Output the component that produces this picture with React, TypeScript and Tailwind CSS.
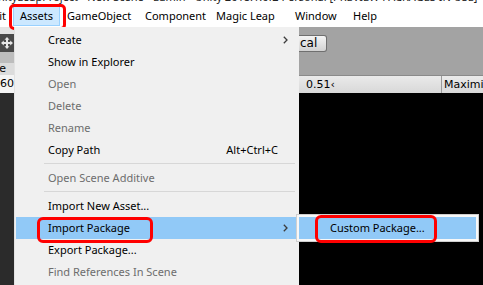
import React from 'react';

type Item =
  | { kind: 'item'; label: string; disabled?: boolean; shortcut?: string; sub?: boolean; active?: boolean }
  | { kind: 'sep' };

const items: Item[] = [
  { kind: 'item', label: 'Create', sub: true },
  { kind: 'item', label: 'Show in Explorer' },
  { kind: 'item', label: 'Open', disabled: true },
  { kind: 'item', label: 'Delete', disabled: true },
  { kind: 'item', label: 'Rename', disabled: true },
  { kind: 'item', label: 'Copy Path', shortcut: 'Alt+Ctrl+C' },
  { kind: 'sep' },
  { kind: 'item', label: 'Open Scene Additive', disabled: true },
  { kind: 'sep' },
  { kind: 'item', label: 'Import New Asset...' },
  { kind: 'item', label: 'Import Package', sub: true, active: true },
  { kind: 'item', label: 'Export Package...' },
  { kind: 'item', label: 'Find References In Scene', disabled: true },
];

const Chevron = () => (
  <svg width="5" height="8" viewBox="0 0 5 8" className="absolute right-[10px] top-[7px]">
    <path d="M0.8 0.8 L4 4 L0.8 7.2" fill="none" stroke="#3c3c3c" strokeWidth="1.3" />
  </svg>
);

function MoveIcon() {
  return (
    <svg width="14" height="14" viewBox="0 0 14 14">
      <path d="M7 1 L9.5 3.8 H8 V6 H10.2 V4.5 L13 7 L10.2 9.5 V8 H8 V10.2 H9.5 L7 13 L4.5 10.2 H6 V8 H3.8 V9.5 L1 7 L3.8 4.5 V6 H6 V3.8 H4.5 Z" fill="#e6e6e6" />
    </svg>
  );
}

export default function App() {
  const menuFont = { fontFamily: '"Noto Sans", sans-serif' };
  const unityFont = { fontFamily: '"DejaVu Sans", sans-serif' };
  return (
    <div className="w-[483px] h-[285px] overflow-hidden bg-white flex flex-col relative" style={menuFont}>
      {/* title bar, mostly scrolled off the top */}
      <div className="h-[5px] overflow-hidden bg-white shrink-0">
        <div className="text-[11px] leading-[14px] -mt-[10px] -ml-[10px] whitespace-nowrap text-[#222]">
          UnityLeapProject - New Scene - Lumin - Unity 2018.1.0f2 Personal [PREVIEW PACKAGES IN USE] &lt;DX11&gt;
        </div>
      </div>

      {/* menu bar */}
      <div className="h-[22px] shrink-0 flex items-center text-[11px] text-black bg-white whitespace-nowrap">
        <div className="w-[13px] overflow-hidden flex justify-end">
          <span className="pr-[7px]">Edit</span>
        </div>
        <div className="relative w-[47px] h-[20px] pl-[6px] flex items-center bg-[#cce8ff] border border-[#99d1ff]">
          Assets
          <div className="absolute -left-[5px] -top-[3px] w-[57px] h-[26px] rounded-[5px] border-[3px] border-[#ff0000]" />
        </div>
        <span className="w-[78px] pl-[7px]">GameObject</span>
        <span className="w-[71px] pl-[7px]">Component</span>
        <span className="w-[79px] pl-[7px]">Magic Leap</span>
        <span className="w-[58px] pl-[7px]">Window</span>
        <span className="w-[38px] pl-[7px]">Help</span>
      </div>

      <div className="flex flex-1 min-h-0">
        {/* left editor strip */}
        <div className="w-[14px] shrink-0 flex flex-col bg-[#2a2a2a]" style={unityFont}>
          <div className="h-[7px] bg-[#e4e4e4]" />
          <div className="h-[18px] bg-[#4a4a4a] flex items-center justify-center overflow-hidden">
            <MoveIcon />
          </div>
          <div className="h-[11px] bg-[#bdbdbd]" />
          <div className="h-[12px] bg-[#dcdcdc] text-[11px] leading-[12px] text-black overflow-hidden flex justify-end pr-[8px]">
            e
          </div>
          <div className="h-[18px] bg-[#f4f4f4] text-[11px] leading-[18px] text-black overflow-hidden whitespace-nowrap flex justify-end">
            60
          </div>
          <div className="flex-1 bg-[#2b2b2b]" />
        </div>

        {/* Assets dropdown */}
        <div className="w-[285px] shrink-0 bg-[#f0f0f0] border-l border-[#e2e2e2] pt-[2px] px-[1px] text-[11px] relative">
          {items.map((it, i) =>
            it.kind === 'sep' ? (
              <div key={i} className="h-[6px] pl-[28px] pr-[3px] pt-[2px]">
                <div className="h-px bg-[#d7d7d7]" />
              </div>
            ) : (
              <div
                key={i}
                className={`relative h-[22px] flex items-center pl-[32px] ${it.active ? 'bg-[#91c9f7]' : ''} ${
                  it.disabled ? 'text-[#6d6d6d]' : 'text-black'
                }`}
              >
                <span className="relative">
                  {it.label}
                  {it.active && (
                    <span className="absolute -left-[11px] -top-[3px] w-[116px] h-[26px] rounded-[6px] border-[3px] border-[#ff0000]" />
                  )}
                </span>
                {it.shortcut && <span className="absolute right-[20px] text-black">{it.shortcut}</span>}
                {it.sub && <Chevron />}
              </div>
            )
          )}
        </div>

        {/* editor area on the right */}
        <div className="flex-1 flex flex-col bg-black" style={unityFont}>
          <div className="h-[48px] bg-[#a3a3a3] pt-[8px] shrink-0">
            <div className="w-[28px] h-[17px] bg-gradient-to-b from-[#f4f4f4] to-[#d2d2d2] border border-l-0 border-[#6f6f6f] rounded-r-[3px] text-[12px] leading-[15px] text-black pl-[1px]">
              cal
            </div>
          </div>
          <div className="h-[18px] shrink-0 flex bg-gradient-to-b from-[#eaeaea] to-[#d8d8d8] border-t border-[#8a8a8a] text-[11px] leading-[17px] text-black whitespace-nowrap overflow-hidden">
            <div className="w-[143px] pl-[7px] border-r border-[#9a9a9a]">0.51‹</div>
            <div className="pl-[2px]">Maximize</div>
          </div>
          <div className="flex-1 bg-black" />
        </div>
      </div>

      {/* Import Package submenu */}
      <div className="absolute left-[296px] top-[214px] w-[183px] h-[28px] bg-[#f7f7f7] border border-[#cfcfcf] p-[2px] text-[11px]">
        <div className="h-full bg-[#91c9f7] flex items-center pl-[31px] text-black">
          <span className="relative">
            Custom Package...
            <span className="absolute -left-[15px] -top-[5px] w-[122px] h-[28px] rounded-[6px] border-[3px] border-[#ff0000]" />
          </span>
        </div>
      </div>
    </div>
  );
}
